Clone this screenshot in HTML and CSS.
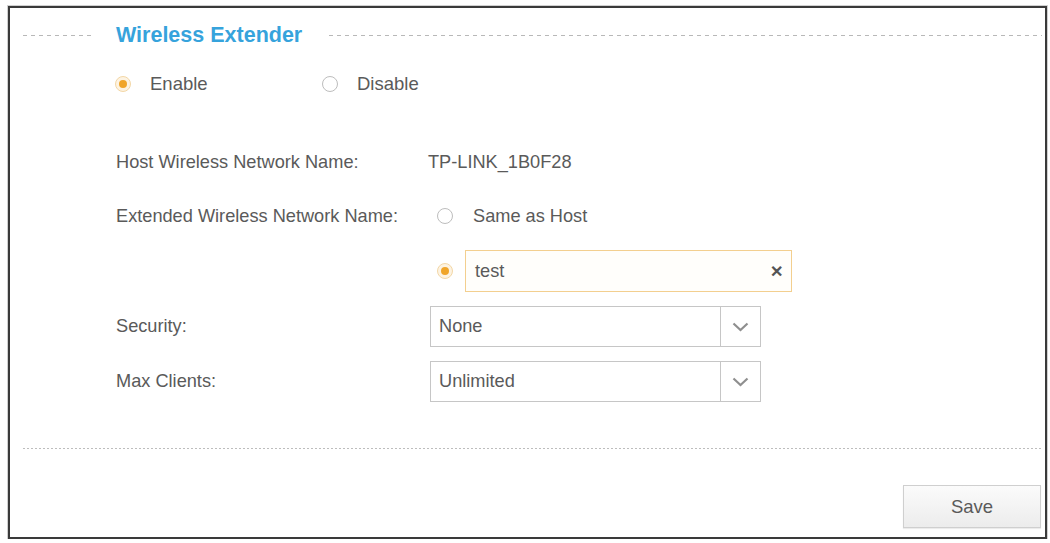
FILE: index.html
```html
<!DOCTYPE html>
<html>
<head>
<meta charset="utf-8">
<link rel="stylesheet" href="styles.css">
</head>
<body>
<div class="frame">
  <div class="legend">
    <span class="dash dash-left"></span>
    <span class="title">Wireless Extender</span>
    <span class="dash dash-right"></span>
  </div>

  <div class="options">
    <label class="opt opt-first"><span class="radio checked"></span><span>Enable</span></label>
    <label class="opt"><span class="radio"></span><span>Disable</span></label>
  </div>

  <div class="row row-host">
    <span class="label">Host Wireless Network Name:</span>
    <span class="value">TP-LINK_1B0F28</span>
  </div>

  <div class="row row-ext">
    <span class="label">Extended Wireless Network Name:</span>
    <span class="value value-radio"><span class="radio"></span><span class="radio-text">Same as Host</span></span>
  </div>

  <div class="row row-input">
    <span class="label"></span>
    <span class="value value-radio"><span class="radio checked"></span>
      <span class="textbox"><span class="textbox-text">test</span><span class="clear">&#x2715;</span></span>
    </span>
  </div>

  <div class="row row-select row-sec">
    <span class="label">Security:</span>
    <span class="select"><span class="select-text">None</span><span class="select-arrow"><svg width="17" height="10" viewBox="0 0 17 10"><path d="M1.5 1.5 L8.5 8 L15.5 1.5" fill="none" stroke="#8f8f8f" stroke-width="2.2"/></svg></span></span>
  </div>

  <div class="row row-select row-max">
    <span class="label">Max Clients:</span>
    <span class="select"><span class="select-text">Unlimited</span><span class="select-arrow"><svg width="17" height="10" viewBox="0 0 17 10"><path d="M1.5 1.5 L8.5 8 L15.5 1.5" fill="none" stroke="#8f8f8f" stroke-width="2.2"/></svg></span></span>
  </div>

  <div class="dots"></div>

  <div class="actions">
    <button class="save">Save</button>
  </div>
</div>
</body>
</html>
```

FILE: styles.css
```css
html, body {
  margin: 0;
  padding: 0;
  background: #fff;
}
body {
  font-family: "Liberation Sans", Arial, sans-serif;
  color: #5a5a5a;
}
.frame {
  box-sizing: border-box;
  margin: 6px 0 0 8px;
  width: 1039px;
  height: 533px;
  border: 2px solid #3a3a3a;
  box-shadow: 0 0 0 1px #d0d0d0;
  display: flex;
  flex-direction: column;
}
.legend {
  margin-top: 12px;
  height: 30px;
  display: flex;
  align-items: center;
  padding-left: 13px;
  padding-right: 3px;
}
.dash {
  height: 1px;
  background: repeating-linear-gradient(to right, #b8b8b8 0 4px, transparent 4px 8px);
}
.dash-left {
  width: 69px;
}
.dash-right {
  flex: 1;
}
.title {
  margin: 0 27px 0 24px;
  font-size: 21.5px;
  font-weight: bold;
  color: #36a3dc;
  white-space: nowrap;
}
.options {
  margin-top: 19px;
  height: 30px;
  display: flex;
  align-items: center;
  padding-left: 105px;
  font-size: 18.5px;
}
.opt {
  display: flex;
  align-items: center;
  gap: 19px;
}
.opt-first {
  width: 207px;
}
.radio {
  box-sizing: border-box;
  width: 16px;
  height: 16px;
  border: 1.5px solid #bdbdbd;
  border-radius: 50%;
  background: #fff;
  flex: none;
  display: inline-flex;
  align-items: center;
  justify-content: center;
}
.radio.checked {
  border-color: #f3d7a6;
  background: #fdf3e2;
}
.radio.checked::after {
  content: "";
  width: 8px;
  height: 8px;
  border-radius: 50%;
  background: #f0a52a;
}
.row {
  display: flex;
  align-items: center;
  padding-left: 106px;
  font-size: 18.2px;
}
.label {
  width: 312px;
  flex: none;
  white-space: nowrap;
}
.row-host {
  margin-top: 48px;
  height: 30px;
}
.row-ext {
  margin-top: 24px;
  height: 30px;
}
.value-radio {
  display: flex;
  align-items: center;
  padding-left: 9px;
}
.radio-text {
  margin-left: 20px;
}
.row-input {
  margin-top: 19px;
  height: 42px;
}
.textbox {
  box-sizing: border-box;
  margin-left: 12px;
  width: 327px;
  height: 42px;
  border: 1px solid #f3cf8f;
  background: #fffefb;
  display: flex;
  align-items: center;
  justify-content: space-between;
  padding: 0 8px 0 9px;
}
.clear {
  font-size: 16px;
  font-weight: bold;
  color: #555;
}
.row-select {
  height: 41px;
}
.row-sec {
  margin-top: 14px;
}
.row-max {
  margin-top: 14px;
}
.row-select .label {
  width: 314px;
}
.select {
  box-sizing: border-box;
  width: 331px;
  height: 41px;
  border: 1px solid #c6c6c6;
  background: #fff;
  display: flex;
  align-items: stretch;
}
.select-text {
  flex: 1;
  display: flex;
  align-items: center;
  padding-left: 8px;
}
.select-arrow {
  width: 39px;
  border-left: 1px solid #c6c6c6;
  display: flex;
  align-items: center;
  justify-content: center;
}
.dots {
  margin: 46px 3px 0 13px;
  height: 1px;
  background: repeating-linear-gradient(to right, #bdbdbd 0 2px, transparent 2px 4px);
}
.actions {
  margin-top: 36px;
  display: flex;
  justify-content: flex-end;
  padding-right: 4px;
}
.save {
  box-sizing: border-box;
  width: 138px;
  height: 43px;
  border: 1px solid #cfcfcf;
  background: linear-gradient(#fbfbfb, #ececec);
  box-shadow: 0 1px 1px rgba(0,0,0,0.08);
  font-family: "Liberation Sans", Arial, sans-serif;
  font-size: 18.5px;
  color: #5a5a5a;
  padding: 0;
}
```
